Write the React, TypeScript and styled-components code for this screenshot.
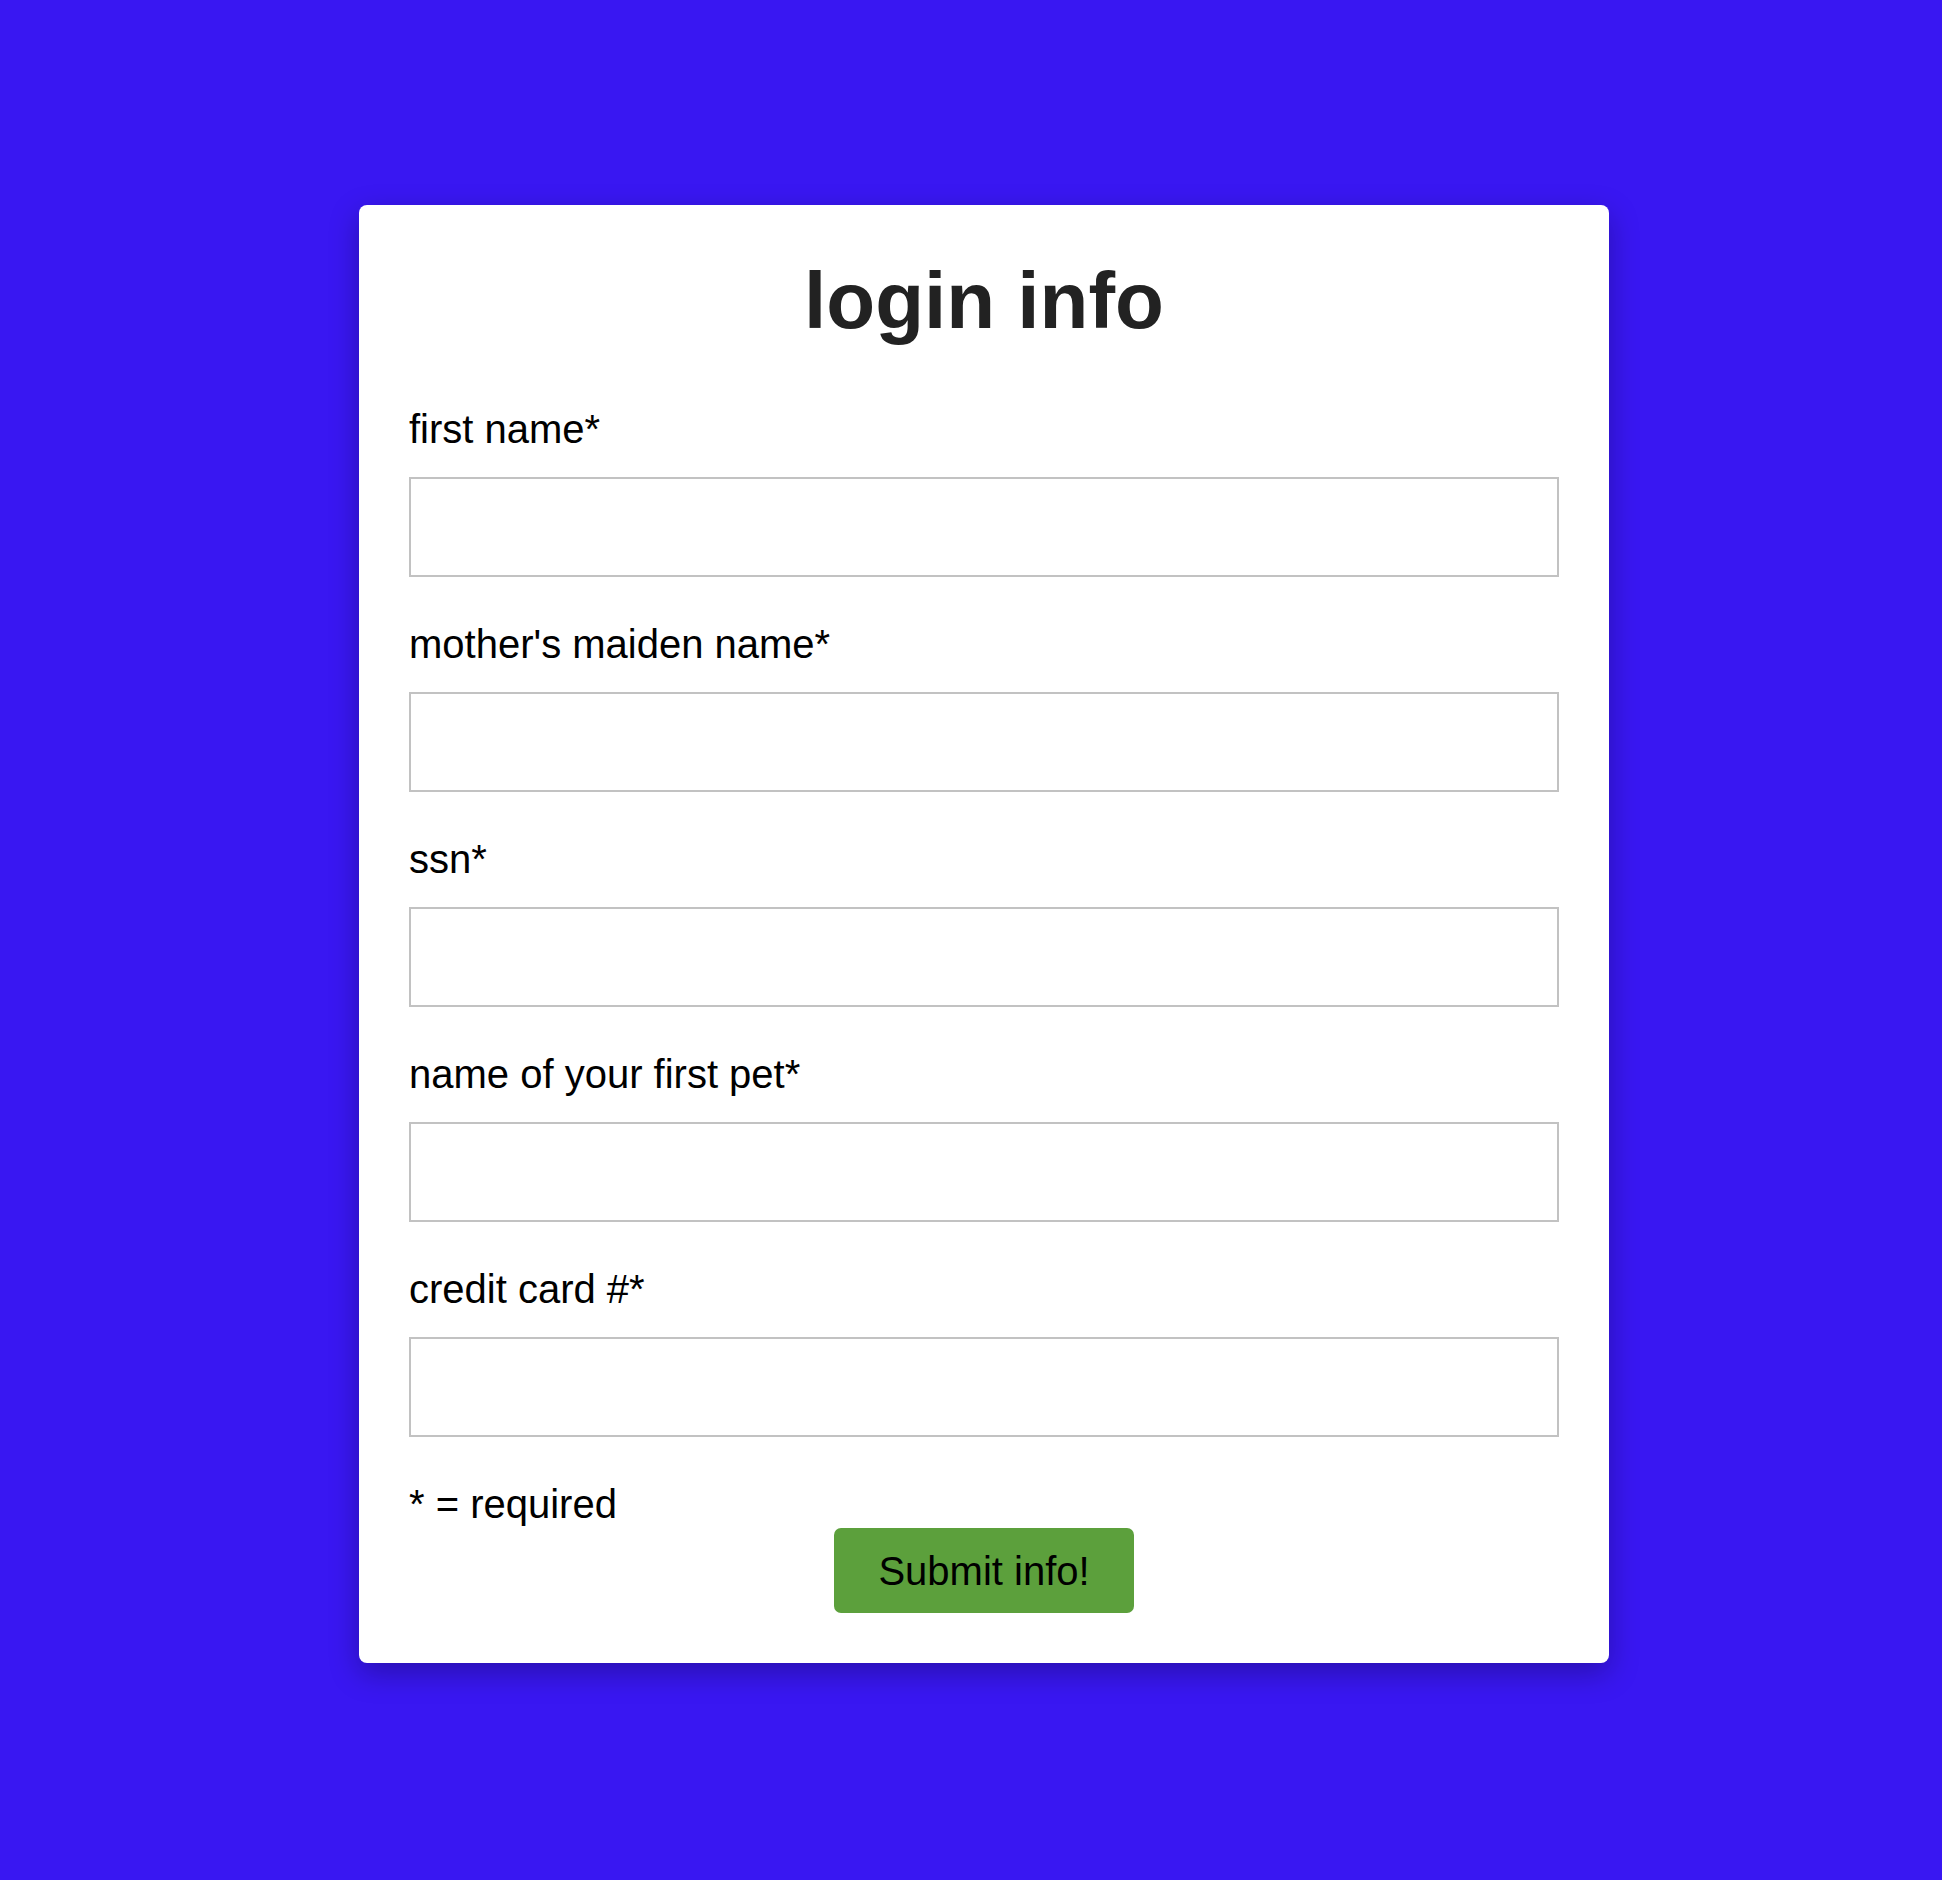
import React from "react";
import styled, { createGlobalStyle } from "styled-components";

const GlobalStyle = createGlobalStyle`
  html, body {
    margin: 0;
    padding: 0;
    background: #3917f2;
  }
  * { box-sizing: border-box; }
`;

const Page = styled.div`
  min-height: 1880px;
  padding: 205px 0 217px 359px;
  font-family: "Liberation Sans", Arial, sans-serif;
`;

const Card = styled.form`
  width: 1250px;
  background: #ffffff;
  border-radius: 8px;
  padding: 50px;
  box-shadow: 0 10px 30px rgba(0, 0, 0, 0.28);
  display: flex;
  flex-direction: column;
`;

const Title = styled.h1`
  margin: 0 0 59px;
  font-size: 80px;
  line-height: 92px;
  font-weight: 700;
  color: #222222;
  text-align: center;
`;

const Field = styled.div`
  display: flex;
  flex-direction: column;
  margin-bottom: 44px;
`;

const Label = styled.label`
  display: block;
  font-size: 40px;
  line-height: 46px;
  color: #000000;
  margin-bottom: 25px;
`;

const Input = styled.input`
  display: block;
  width: 100%;
  height: 100px;
  border: 2px solid #c2c2c2;
  border-radius: 0;
  background: #ffffff;
  font-family: inherit;
  font-size: 40px;
  padding: 0 10px;
  outline: none;
`;

const Note = styled.p`
  margin: 0;
  font-size: 40px;
  line-height: 46px;
  color: #000000;
`;

const Submit = styled.button`
  align-self: center;
  margin-top: 1px;
  width: 300px;
  height: 85px;
  border: none;
  border-radius: 7px;
  background: #5ca03c;
  color: #000000;
  font-family: "Liberation Sans", Arial, sans-serif;
  font-size: 40px;
  line-height: 46px;
  padding: 0;
  cursor: pointer;
`;

const fields = [
  { id: "first", label: "first name*" },
  { id: "maiden", label: "mother's maiden name*" },
  { id: "ssn", label: "ssn*" },
  { id: "pet", label: "name of your first pet*" },
  { id: "cc", label: "credit card #*" },
];

export default function App() {
  return (
    <>
      <GlobalStyle />
      <Page>
        <Card onSubmit={(e) => e.preventDefault()}>
          <Title>login info</Title>
          {fields.map((f) => (
            <Field key={f.id}>
              <Label htmlFor={f.id}>{f.label}</Label>
              <Input id={f.id} type="text" />
            </Field>
          ))}
          <Note>* = required</Note>
          <Submit type="submit">Submit info!</Submit>
        </Card>
      </Page>
    </>
  );
}
